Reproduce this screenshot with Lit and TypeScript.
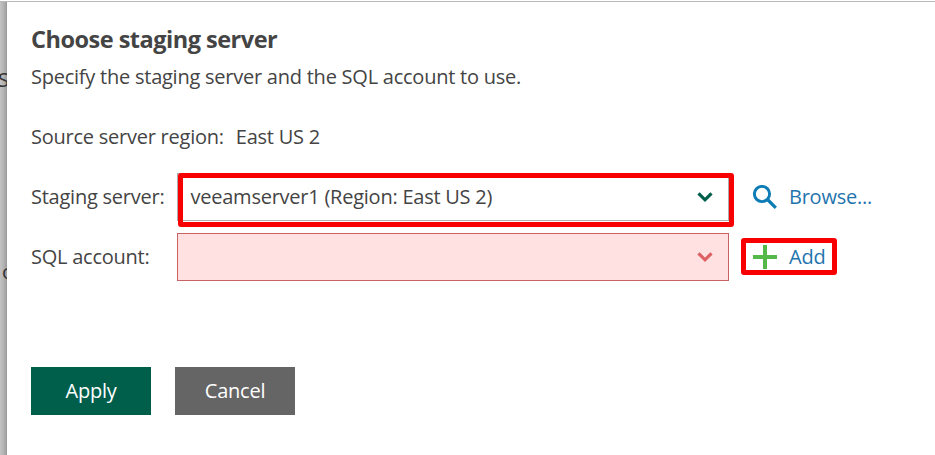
import { LitElement, html, css } from "lit";
import { customElement } from "lit/decorators.js";

@customElement("app-root")
export class AppRoot extends LitElement {
  static styles = css`
    :host {
      display: flex;
      box-sizing: border-box;
      height: 455px;
      overflow: hidden;
      background: #fff;
      color: #444;
      font: 20px/28px "Open Sans", "Noto Sans", sans-serif;
      padding-top: 1px;
      letter-spacing: -0.24px;
    }
    .behind {
      flex: none;
      box-sizing: border-box;
      width: 7px;
      overflow: hidden;
      border-top: 1px solid #b9b9b9;
      background: linear-gradient(90deg, #c3c3c3, #b4b4b4 50%, #999);
      padding-top: 64px;
      white-space: nowrap;
      color: #333;
    }
    .cut { height: 28px; margin-left: -2px; }
    .cut.second { margin: 164px 0 0 2px; }
    .panel {
      flex: 1;
      box-sizing: border-box;
      border-top: 1px solid #b9b9b9;
      background: #fff;
      padding: 23px 24px 0;
    }
    h1 {
      margin: 0;
      font-size: 23.5px;
      line-height: 28px;
      font-weight: 700;
      letter-spacing: -0.5px;
      white-space: nowrap;
    }
    p { margin: 10px 0 0; white-space: nowrap; }
    .region { display: flex; gap: 12px; margin-top: 32px; white-space: nowrap; }
    .row { display: flex; align-items: center; height: 48px; margin-top: 12px; }
    .row.first { margin-top: 22px; }
    .label { width: 146px; white-space: nowrap; }
    .select {
      position: relative;
      box-sizing: border-box;
      display: flex;
      align-items: center;
      justify-content: space-between;
      width: 552px;
      height: 48px;
      border: 1px solid #adadad;
      padding: 0 15px 0 12.5px;
    }
    .select.invalid { border-color: #c96262; background: #ffe1e1; }
    .action {
      position: relative;
      display: flex;
      align-items: center;
      gap: 12px;
      margin-left: 24px;
      color: #1f74ae;
      white-space: nowrap;
    }
    .mark {
      position: absolute;
      box-sizing: border-box;
      border: 5px solid #f80000;
      border-radius: 3px;
      pointer-events: none;
    }
    .mark.server { left: 0; top: -1px; width: 556px; height: 54px; }
    .mark.add { left: -12px; top: -5px; width: 96px; height: 37px; }
    svg { display: block; flex: none; fill: none; }
    .buttons { display: flex; gap: 24px; margin-top: 86px; }
    button {
      width: 120px;
      height: 48px;
      padding: 0;
      border: 0;
      background: #005f4b;
      color: #fff;
      font: inherit;
      letter-spacing: inherit;
    }
    button.cancel { background: #656565; }
  `;

  private chevron(color: string) {
    return html`<svg width="16" height="12" viewBox="0 0 16 12">
      <path d="M1.5 2.3 8 8.8 14.5 2.3" stroke=${color} stroke-width="3.2" />
    </svg>`;
  }

  render() {
    return html`
      <div class="behind">
        <div class="cut">S</div>
        <div class="cut second">o</div>
      </div>
      <main class="panel">
        <h1>Choose staging server</h1>
        <p>Specify the staging server and the SQL account to use.</p>
        <div class="region"><span>Source server region:</span><span>East US 2</span></div>
        <div class="row first">
          <span class="label">Staging server:</span>
          <div class="select">
            <span>veeamserver1 (Region: East US 2)</span>
            ${this.chevron("#005f4b")}
            <div class="mark server"></div>
          </div>
          <a class="action">
            <svg width="24" height="24" viewBox="0 0 24 24" stroke="#0d7cb5">
              <circle cx="9" cy="9" r="7.6" stroke-width="2.9" />
              <path d="M14 14 22.8 22.8" stroke-width="3.2" />
            </svg>
            <span>Browse...</span>
          </a>
        </div>
        <div class="row">
          <span class="label">SQL account:</span>
          <div class="select invalid"><span></span>${this.chevron("#dc6064")}</div>
          <a class="action">
            <svg width="24" height="24" viewBox="0 0 24 24">
              <path d="M12 0V24M0 12H24" stroke="#54b948" stroke-width="4" />
            </svg>
            <span>Add</span>
            <div class="mark add"></div>
          </a>
        </div>
        <div class="buttons">
          <button>Apply</button>
          <button class="cancel">Cancel</button>
        </div>
      </main>
    `;
  }
}
